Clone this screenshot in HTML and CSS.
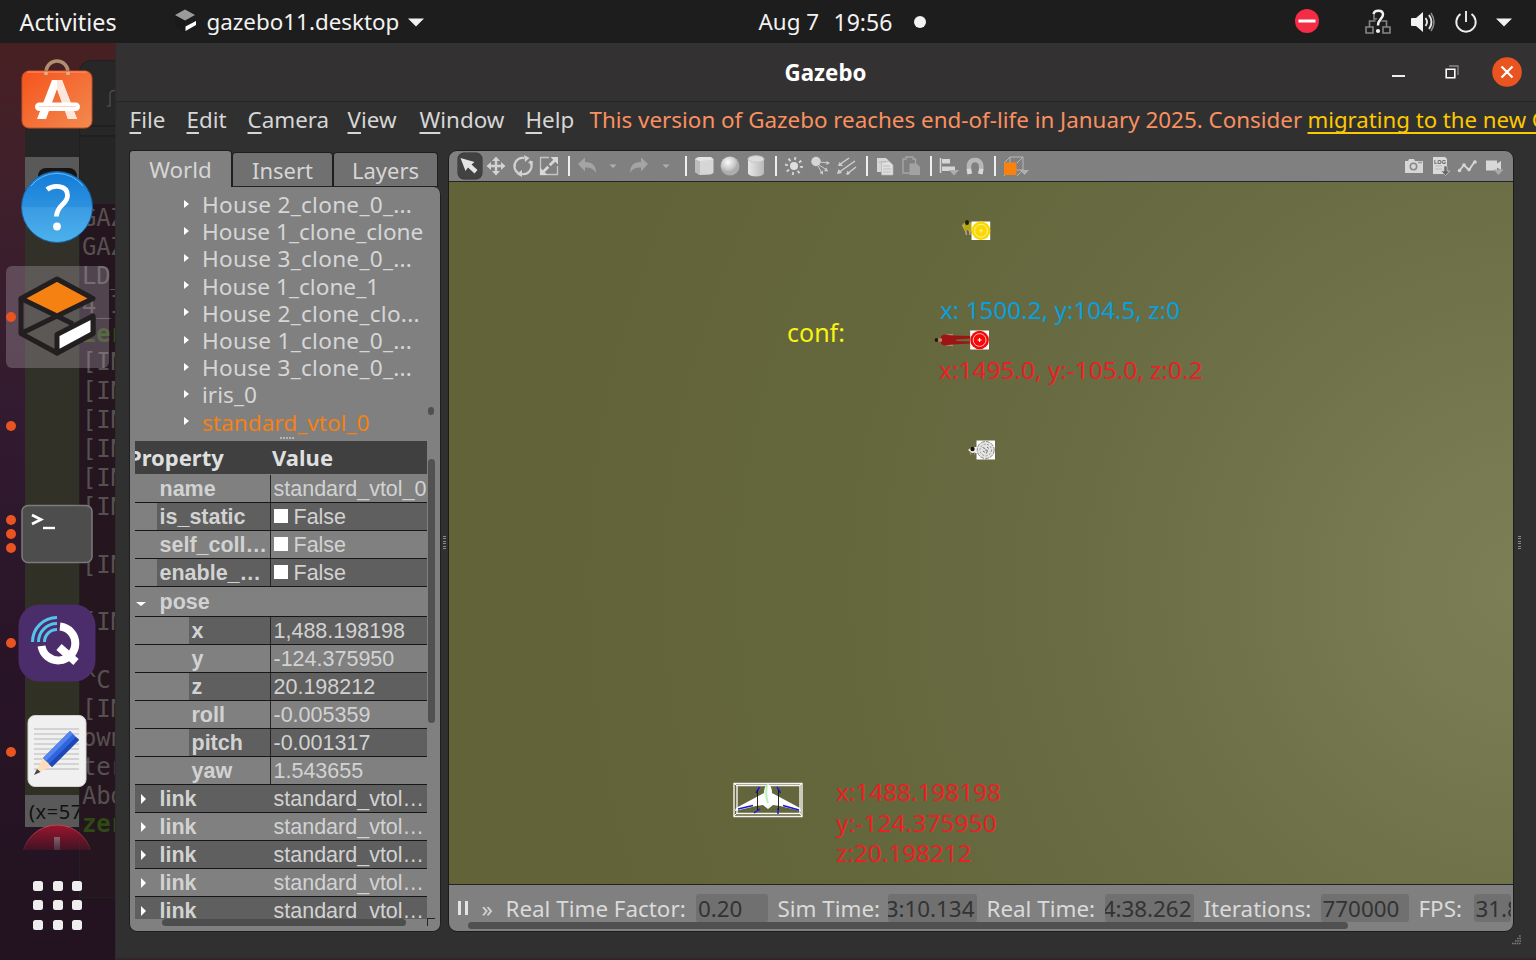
FILE: index.html
```
<!DOCTYPE html>
<html lang="en">
<head>
<meta charset="utf-8">
<title>Gazebo</title>
<link rel="stylesheet" href="styles.css">
</head>
<body>
<header class="topbar">
  <span class="activities">Activities</span>
  <svg class="app-mark" width="24" height="24" viewBox="0 0 24 24"><path d="M2 6 12 .5 22 6 12 11.500z" fill="#9a9a9a"/><path d="M2 7v10l10 6V12z" fill="#1a1a1a"/><path d="M12.500 17.500 23 12v4l-10.500 6z" fill="#fff"/></svg>
  <span class="app-name">gazebo11.desktop</span>
  <svg class="caret" width="16" height="9" viewBox="0 0 16 9"><path d="M0 .5h16L8 8.500z" fill="#f2f2f2"/></svg>
  <div class="clock"><span class="date">Aug 7</span><span class="time">19:56</span><i class="notice"></i></div>
  <div class="status">
    <svg width="26" height="26" viewBox="0 0 26 26"><circle cx="13" cy="13" r="12" fill="#f42c45"/><path d="M4.500 11.500h17v3h-17z" fill="#fff"/></svg>
    <svg class="s-net" width="28" height="28" viewBox="0 0 28 28"><g fill="none" stroke="#858585" stroke-width="1.600"><path d="M2 19h7v6H2zM19 19h7v6h-7zM5.500 19v-6h6M17 13h5.500v6M10 5v6h4"/></g><path d="M10 5.500C11 1 18.500 1 18.500 6c0 4-4.500 4-4.500 10" fill="none" stroke="#1d1d1d" stroke-width="5"/><path d="M9.500 6C10.500 1.500 19 1.500 19 6.500c0 4-5 4.500-5 11" fill="none" stroke="#f2f2f2" stroke-width="2.500"/><circle cx="14" cy="23" r="2.100" fill="#f2f2f2"/></svg>
    <svg class="s-vol" width="26" height="24" viewBox="0 0 26 24"><path d="M2 8h4l7-6v20l-7-6H2q-1 0-1-1V9q0-1 1-1z" fill="#f2f2f2"/><path d="M15.500 8q3 4 0 8M19 5q5 7 0 14" fill="none" stroke="#e6e6e6" stroke-width="1.900"/><path d="M21 3q6 9 0 18" fill="none" stroke="#8a8a8a" stroke-width="1.500"/></svg>
    <svg class="s-pow" width="24" height="24" viewBox="0 0 24 24"><path d="M6.500 4a9.700 9.700 0 1 0 11 0M12 1v11" fill="none" stroke="#eee" stroke-width="1.900"/></svg>
    <svg class="s-car" width="16" height="9" viewBox="0 0 16 9"><path d="M0 .5h16L8 8.500z" fill="#f2f2f2"/></svg>
  </div>
</header>

<main class="desktop">
  <aside class="dock">
    <div class="behind-sim"><div class="sim-tools"></div><div class="sim-note">(x=57</div></div>
    <div class="behind-term"><div class="term-head"><svg width="10" height="20" viewBox="0 0 10 20"><path d="M0 17h3V5q0-3.500 5-3.500" fill="none" stroke="#4a4a4a" stroke-width="1.500"/></svg></div><pre>GAZ
GAZ
LD_
4_I
<b>zer</b>
[IN
[IN
[IN
[IN
[IN
[IN

[IN

[IN

^C[
[IN
own
ter
Abo
<b>zer</b></pre></div>
    <ul class="launchers">
      <li class="software"><svg width="76" height="76" viewBox="0 0 76 76"><defs><linearGradient id="sw" x2="1" y2="1"><stop stop-color="#f5531c"/><stop offset="1" stop-color="#f28b50"/></linearGradient></defs><path d="M27 17v-3a11 11 0 0 1 22 0v3" fill="none" stroke="#b08f70" stroke-width="3.500"/><rect x="3" y="13" width="70" height="57" rx="7" fill="url(#sw)" stroke="#c65027"/><path d="M8 14h60" stroke="#ff9a70"/><path d="M27 17v-3M49 17v-3" stroke="#d9b391" stroke-width="3.500"/><path d="M33 22h10l15 39h-9L38 31 27 61h-9z" fill="#fff"/><path d="M38 22h5l15 39h-9L38 31z" fill="#ffe6dc"/><rect x="16" y="44.500" width="45" height="8.500" rx="4.200" fill="#fff"/><path d="M20 48.500h37" stroke="#ffd1c2"/></svg></li>
      <li><svg width="76" height="76" viewBox="0 0 76 76"><defs><linearGradient id="hp" x2="0" y2="1"><stop stop-color="#147bd8"/><stop offset=".5" stop-color="#2c92df"/><stop offset=".51" stop-color="#3b9ce3"/><stop offset="1" stop-color="#4cb1ec"/></linearGradient></defs><circle cx="38" cy="38" r="35.500" fill="url(#hp)" stroke="#17629f"/><path d="M12 17A33 33 0 0 1 64 17" fill="none" stroke="#65bdf5"/><path d="M28 20.500c6-4.500 20.500-5 20.500 6 0 9-11 9.500-11 21" fill="none" stroke="#fff" stroke-width="4.800"/><circle cx="38" cy="57.500" r="3.900" fill="#fff"/></svg></li>
      <li class="active"><i></i><svg width="84" height="84" viewBox="0 0 84 84"><g stroke="#231f20" stroke-width="5" stroke-linejoin="round"><path d="M6 24.500v35L42 79l36-19.500v-16M6 59.500 42 42l16 8" fill="none"/><path d="M6 24.500 42 5l36 19.500L42 42z" fill="#f58113"/><path d="M42 60.500 78 42v17.500L42 79z" fill="#fff"/></g></svg></li>
      <li><i></i></li>
      <li><i class="three"></i><svg width="76" height="64" viewBox="0 0 76 64"><rect x="3" y="3.500" width="70" height="57" rx="6" fill="#4d4d4d" stroke="#7b7b7b" stroke-width="1.500"/><path d="m13 13 9 4.500-9 4.500" fill="none" stroke="#fff" stroke-width="2.700"/><path d="M24 26h12" stroke="#fff" stroke-width="2.400"/></svg></li>
      <li><i></i><svg width="78" height="78" viewBox="0 0 78 78"><rect x=".5" y=".5" width="77" height="77" rx="21" fill="#4c2d6b"/><g fill="none" stroke="#55c4ec" stroke-width="3"><path d="M14.500 38A24.500 24.500 0 0 1 39 13.500M20.500 38A18.500 18.500 0 0 1 39 19.500M26.500 38A12.500 12.500 0 0 1 39 25.500"/></g><path d="M42 22.500A17 17 0 1 1 23.500 42" fill="none" stroke="#fff" stroke-width="8"/><path d="m41 43 17 15" stroke="#fff" stroke-width="8"/></svg></li>
      <li><i></i><svg width="62" height="76" viewBox="0 0 62 76"><rect x="2" y="2.500" width="58" height="71" rx="7" fill="#f0f0f0" stroke="#d2d2d2"/><path d="M8 16h45M8 21h45M8 26h45M8 31h45M8 36h45M8 41h45M8 46h45M8 51h45M8 56h45" stroke="#c9c9c9" stroke-width="1.500"/><path d="m8 62 9-17 8.500 8z" fill="#ffdcbc"/><path d="m8 62 3-6 3.500 3z" fill="#444"/><path d="m17 45 27-27 9 9-27 27z" fill="#2e64dc"/><path d="m17 45 27-27 3 3-27 27z" fill="#5585ed"/><path d="m23 51 27-27 3 3-27 27z" fill="#1f48b5"/></svg></li>
      <li class="fading"><svg width="76" height="76" viewBox="0 0 76 76"><circle cx="38" cy="38" r="35" fill="#98152d" stroke="#bd455b"/><path d="M38 15v20" stroke="#b98a94" stroke-width="6"/></svg></li>
    </ul>
    <div class="all-apps"><b></b><b></b><b></b><b></b><b></b><b></b><b></b><b></b><b></b></div>
  </aside>

  <section class="window">
    <div class="titlebar">
      <h1>Gazebo</h1>
      <div class="controls"><i class="min"></i>
        <svg class="max" width="14" height="14" viewBox="0 0 14 14"><path d="M4 1h9v9" fill="none" stroke="#888" stroke-width="1.300"/><path d="M1.200 4.200h8.600v8.600H1.200z" fill="none" stroke="#fff" stroke-width="1.600"/></svg>
        <svg class="close" width="30" height="30" viewBox="0 0 30 30"><circle cx="15" cy="15" r="14.800" fill="#e95420"/><path d="m9.500 9.500 11 11m0-11-11 11" stroke="#fff" stroke-width="2.200"/></svg></div>
    </div>
    <nav class="menu"><span><u>F</u>ile</span><span><u>E</u>dit</span><span><u>C</u>amera</span><span><u>V</u>iew</span><span><u>W</u>indow</span><span><u>H</u>elp</span><span class="eol">This version of Gazebo reaches end-of-life in January 2025. Consider</span><a>migrating to the new Gazebo</a></nav>
    <div class="work">
      <div class="left">
        <div class="tabs"><span class="on">World</span><span>Insert</span><span>Layers</span></div>
        <div class="panel">
          <ul class="tree">
            <li class="cut">House 2_clone_0_...</li><li>House 1_clone_clone</li><li class="cut">House 3_clone_0_...</li><li>House 1_clone_1</li><li class="cut">House 2_clone_clo...</li><li class="cut">House 1_clone_0_...</li><li class="cut">House 3_clone_0_...</li><li>iris_0</li><li class="sel">standard_vtol_0</li>
          </ul>
          <i class="tree-scroll"></i><i class="v-grip"></i>
          <div class="props">
            <div class="head"><span><em>Property</em></span><span>Value</span></div>
            <div class="row"><b>name</b><span>standard_vtol_0</span></div>
            <div class="row dark"><b>is_static</b><span><i></i>False</span></div>
            <div class="row"><b>self_coll…</b><span><i></i>False</span></div>
            <div class="row dark"><b>enable_…</b><span><i></i>False</span></div>
            <div class="row group open"><b>pose</b><span></span></div>
            <div class="row dark deep"><b>x</b><span>1,488.198198</span></div>
            <div class="row deep"><b>y</b><span>-124.375950</span></div>
            <div class="row dark deep"><b>z</b><span>20.198212</span></div>
            <div class="row deep"><b>roll</b><span>-0.005359</span></div>
            <div class="row dark deep"><b>pitch</b><span>-0.001317</span></div>
            <div class="row deep"><b>yaw</b><span>1.543655</span></div>
            <div class="row dark group"><b>link</b><span>standard_vtol…</span></div>
            <div class="row group"><b>link</b><span>standard_vtol…</span></div>
            <div class="row dark group"><b>link</b><span>standard_vtol…</span></div>
            <div class="row group"><b>link</b><span>standard_vtol…</span></div>
            <div class="row dark group"><b>link</b><span>standard_vtol…</span></div>
          </div>
          <i class="props-v"></i><i class="props-h"></i><i class="corner"></i>
        </div>
      </div>
      <div class="splitter"><i></i></div>
      <div class="view">
        <div class="tools">
          <svg class="pressed" viewBox="0 0 24 24"><path d="m2.500 4 14 4-3 2.500 6 5.500-3 3.500-6.500-6-2.500 3.500z" fill="#e4e4e4"/></svg>
          <svg viewBox="0 0 24 24"><path d="M12 5v14M5 12h14" stroke="#d2d2d2" stroke-width="2.400"/><path d="m12 2.500 4 4.500H8zM12 21.500 8 17h8zM2.500 12 7 8v8zM21.500 12 17 16V8z" fill="#d2d2d2"/></svg>
          <svg viewBox="0 0 24 24"><path d="M5 17A8.300 8.300 0 0 1 13 4M19 7a8.300 8.300 0 0 1-8 13M4 10a8.300 8.300 0 0 0 3 9" fill="none" stroke="#d2d2d2" stroke-width="2.200"/><path d="m13 1 5.500 3L14 8zM11 16v7l-5.500-3zM17 8l5-1-1 5z" fill="#d2d2d2"/></svg>
          <svg viewBox="0 0 24 24"><path d="M12 3.500H3.500V12M20.500 12v8.500H12M3.500 12v8.500H12" fill="none" stroke="#c4c4c4" stroke-width="1.300"/><path d="m6 18 12-12" stroke="#d8d8d8" stroke-width="2.700" stroke-dasharray="7.500 2"/><path d="M13.500 3H21v7.500zM3 13.500 10.500 21H3z" fill="#d8d8d8"/></svg>
          <s></s>
          <svg viewBox="0 0 24 24"><path d="m3 10 7-6.500V8q11 0 11 11-3-6-11-5.500v4z" fill="#a4a4a4"/></svg>
          <svg viewBox="0 0 24 24"><path d="M8.500 10.500h7L12 14z" fill="#b0b0b0"/></svg>
          <svg viewBox="0 0 24 24"><path d="m21 10-7-6.500V8Q3 8 3 19q3-6 11-5.500v4z" fill="#a4a4a4"/></svg>
          <svg viewBox="0 0 24 24"><path d="M8.500 10.500h7L12 14z" fill="#b0b0b0"/></svg>
          <s></s>
          <svg viewBox="0 0 24 24"><path d="m3 5 3-2h12l3.500 2v14l-3 1.500-11 .5L3 18z" fill="#d6d6d6"/><path d="m3 5 5 2v14l-5-3z" fill="#bcbcbc"/><path d="m3 5 5-2h11l2.500 2.500L8 7z" fill="#e4e4e4"/></svg>
          <svg viewBox="0 0 24 24"><defs><radialGradient id="ball" cx=".4" cy=".3"><stop stop-color="#fafafa"/><stop offset=".8" stop-color="#c5c5c5"/><stop offset="1" stop-color="#adadad"/></radialGradient></defs><circle cx="12" cy="12" r="9.500" fill="url(#ball)"/></svg>
          <svg viewBox="0 0 24 24"><defs><linearGradient id="cyl"><stop stop-color="#e8e8e8"/><stop offset="1" stop-color="#b8b8b8"/></linearGradient></defs><path d="M4 5v14c0 4.500 16 4.500 16 0V5z" fill="url(#cyl)"/><ellipse cx="12" cy="5" rx="8" ry="3.200" fill="#dcdcdc" stroke="#c5c5c5"/></svg>
          <s></s>
          <svg viewBox="0 0 24 24"><circle cx="12" cy="12" r="4" fill="#dedede"/><circle cx="12" cy="12" r="7.500" fill="none" stroke="#d5d5d5" stroke-width="3" stroke-dasharray="1.900 3.990"/></svg>
          <svg viewBox="0 0 24 24"><circle cx="8" cy="7.500" r="4.700" fill="#d5d5d5"/><path d="m12 8 8 1M11 11l8 5M10 12l4 7" stroke="#ccc" stroke-width="1"/><path d="m18.500 7 3.500 2-3.500 2zM18.500 13.500l1.500 4-4-.5zM15 16.500v4l-3.500-1.500z" fill="#ccc"/></svg>
          <svg viewBox="0 0 24 24"><path d="M4 11 14 4M3 19 20 7M12 20l9-7" stroke="#cfcfcf" stroke-width="1.500"/><path d="m3 12 1.500-4L8 12zM2 20l1.500-5 3.500 4zM11 21l1.500-4.500L15 20z" fill="#cfcfcf"/></svg>
          <s></s>
          <svg viewBox="0 0 24 24"><path d="M4 4h9l3 3v11H4z" fill="#d6d6d6"/><path d="M8.500 7.500h8l3.500 3.500v10H8.500z" fill="#dfdfdf" stroke="#b5b5b5" stroke-width=".7"/><path d="M5.500 8h8M10 12h7M10 15h8M10 18h8" stroke="#b4b4b4" stroke-width=".8"/></svg>
          <svg viewBox="0 0 24 24"><path d="M4 5h3V3h7v2h2.500v14H4z" fill="none" stroke="#a5a5a5" stroke-width="1.400"/><path d="M10.500 9.500h7l3.500 3.500v8H10.500z" fill="#a2a2a2"/></svg>
          <s></s>
          <svg viewBox="0 0 24 24"><path d="M3.500 4v15" stroke="#d5d5d5" stroke-width="1.500"/><path d="M5 5h8v4.500H5zM5 12.500h13V17H5z" fill="#d5d5d5"/><path d="M12 16h10l-5 5.500z" fill="#aeaeae"/></svg>
          <svg viewBox="0 0 24 24"><path d="M7 19.500Q3.500 6 12 6t5.500 13.500" fill="none" stroke="#b7b7b7" stroke-width="4.600"/><path d="m3.500 15 4-.5 1.500 5-4.500 1zM20.500 15l-4-.5-1.500 5 4.500 1z" fill="#d8d8d8"/></svg>
          <s></s>
          <svg viewBox="0 0 28 24" class="wide"><path d="M3 9 9 3h13v13l-6 6M9 3v13h13M16 9l6-6M9 16l-6 6" fill="none" stroke="#b6b6b6"/><path d="M3 8.500h12.500V21H3z" fill="#f8810f"/><path d="M19 16h9l-4.500 5z" fill="#b0b0b0"/></svg>
          <div class="tools-end">
            <svg viewBox="0 0 24 24"><path d="M3 7h3l1-2h5l1 2h8v12H3z" fill="#d6d6d6"/><circle cx="11.500" cy="12.500" r="3.200" fill="none" stroke="#888" stroke-width="1.500"/><path d="M16 8.500h4" stroke="#999" stroke-width="1.300"/></svg>
            <svg viewBox="0 0 24 24"><path d="M4 3h12l2 2v15H4z" fill="#dadada"/><text x="5" y="9.500" class="log">LOG</text><path d="M6 12h7M6 15h7" stroke="#bbb"/><path d="M15 12h3v5h3l-4.500 4.500L12 17h3z" fill="#666" stroke="#d0d0d0" stroke-width=".7"/></svg>
            <svg viewBox="0 0 24 24"><path d="m4 17 5-6 5 5 6-9" fill="none" stroke="#d6d6d6" stroke-width="1.800"/><g fill="#d6d6d6"><circle cx="4.500" cy="16.500" r="1.800"/><circle cx="9" cy="11" r="1.800"/><circle cx="14" cy="15.500" r="1.800"/><circle cx="20" cy="8" r="1.800"/></g></svg>
            <svg viewBox="0 0 24 24"><path d="M4 6.500h11v3l4-2.500v9l-4-2.500v3H4z" fill="#d8d8d8"/><path d="M11.500 15.500h10l-5 5.500z" fill="#aaa"/></svg>
          </div>
        </div>
        <div class="scene">
          <p class="tag yellow conf">conf:</p>
          <p class="tag blue upper">x: 1500.2, y:104.5, z:0</p>
          <p class="tag red lower">x:1495.0, y:-105.0, z:0.2</p>
          <p class="tag red craft-pos">x:1488.198198<br><span>y:-124.375950</span><br>z:20.198212</p>
          <svg class="pin pin-y" width="30" height="22" viewBox="0 0 30 22"><path d="M1 6 5 2l6 2v7l-1.500 3-3-3-3 1z" fill="#b3a90e"/><path d="m2 6 1 3M4.500 11l1 5M8.500 11l.5 5" stroke="#c9a27c" stroke-width="1.400"/><ellipse cx="6" cy="3.500" rx="2" ry="2.500" fill="#1d1b10"/><path d="M10.500 2.500h18.700v18.500H10.500z" fill="#fff"/><circle cx="20" cy="11.700" r="9.300" fill="#fbd900"/><circle cx="20" cy="11.700" r="6.400" fill="none" stroke="#fff19c"/><path d="M18 11.700h4M20 9.700v4" stroke="#fff8c8" stroke-width=".8"/></svg>
          <svg class="pin pin-r" width="56" height="22" viewBox="0 0 56 22"><path d="m11 6.500 8-1M11 15.500l8 1" stroke="#bb8965" stroke-width="1.500"/><path d="m7 7 3-1.500 8 1 18 .5v2.500l-14 1v1.500l14 .5v2l-18 1-8 1L7 15z" fill="#9c1416"/><path d="M3 11h5" stroke="#bb8965" stroke-width="3"/><circle cx="2.500" cy="11" r="1.900" fill="#29170f"/><path d="M36.200 1.500H55V20.500H36.200z" fill="#fff"/><circle cx="45.600" cy="11" r="9.300" fill="#fb0707"/><circle cx="45.600" cy="11" r="6.400" fill="none" stroke="#ffc0c0"/><path d="M43.600 11h4M45.600 9v4" stroke="#fff"/></svg>
          <svg class="pin pin-w" width="30" height="22" viewBox="0 0 30 22"><path d="m1 11 4-3 6 0-1 6-5 0z" fill="#eee"/><circle cx="5.500" cy="10" r="2.200" fill="#17140f"/><path d="m3 13 1 3M7 13l1 3" stroke="#b38f70"/><path d="M9.500 1.500H28V20.500H9.500z" fill="#fff"/><circle cx="18.700" cy="11" r="8.500" fill="#e4e4e4" stroke="#888" stroke-dasharray="4 1"/><circle cx="18.700" cy="11" r="5.800" fill="none" stroke="#999" stroke-dasharray="2 1.500"/><path d="m15.500 8.500 2.500 1M20 8l2 1.500M16 12l2 1.500M20.500 11l-1 3.500M18 11h2" stroke="#666" stroke-width=".9"/></svg>
          <svg class="pin craft" width="70" height="36" viewBox="0 0 70 36"><path d="M1 1.500h68v33H1zM4 3.500h63v28H4z" fill="none" stroke="#f4f4f4" stroke-width="1.400"/><path d="m1 34 3-3M66 31l3 3M1 1l3 3M66 4l3-3" stroke="#fff"/><path d="M35 2q4 2 4 9l28 15 1 3-21-5-7-1-5 4-5-4-7 1-21 5 1-3 28-15q0-7 4-9z" fill="#fff"/><path d="M34 3q-2 10 1 18" fill="none" stroke="#b6f4b4" stroke-width="2"/><path d="m5 27 15-3.500M50 23.500 66 28M23 11l3.500-6M44 5l3.500 6M21 31l6-4M45 26v6" stroke="#1919e0" stroke-width="1.500"/><path d="M24.500 8v20M45.500 8v20" stroke="#111" stroke-width=".9"/></svg>
        </div>
        <div class="readout">
          <i class="pause"></i><span class="step">»</span>
          <label class="l1">Real Time Factor:</label><output class="o1">0.20</output>
          <label class="l2">Sim Time:</label><output class="o2 end"><em>3:10.134</em></output>
          <label class="l3">Real Time:</label><output class="o3 end"><em>4:38.262</em></output>
          <label class="l4">Iterations:</label><output class="o4">770000</output>
          <label class="l5">FPS:</label><output class="o5">31.85</output>
          <i class="readout-scroll"></i>
        </div>
      </div>
      <div class="splitter right"><i></i></div>
    </div>
    <svg class="resize" width="10" height="10" viewBox="0 0 10 10"><path d="M7 1h2M5 3.500h4M3 6h6M0 8.500h9" stroke="#777" stroke-width="1.700" stroke-dasharray="1.700 .6"/></svg>
  </section>
</main>
</body>
</html>
```
FILE: styles.css
```
* { box-sizing: border-box; }
body { margin: 0; width: 1536px; height: 960px; overflow: hidden; display: flex; flex-direction: column; background: #231520; color: #d6d6d6; font: 22.4px/28px "Noto Sans", "Open Sans", sans-serif; white-space: nowrap; }
ul, p, h1, pre { margin: 0; padding: 0; list-style: none; }
svg { display: block; flex: none; }
em { font-style: normal; }

.topbar { position: relative; height: 43px; flex: none; display: flex; align-items: center; background: #1d1d1d; color: #f2f2f2; padding-left: 19.500px; }
.activities { font-size: 23.3px; width: 153px; }
.app-mark { margin-top: -1px; }
.app-name { margin-left: 10px; width: 201.500px; }
.caret { margin-top: 1px; }
.clock { position: absolute; left: 758.500px; top: 8px; display: flex; align-items: center; }
.date { width: 75px; }
.time { font-size: 23px; width: 80.500px; }
.notice { width: 12px; height: 12px; border-radius: 50%; background: #f2f2f2; }
.status { margin-left: auto; padding-right: 24px; display: flex; align-items: center; }
.status > svg:first-child { margin-top: -1px; }
.s-net { margin-left: 44px; }
.s-vol { margin-left: 18px; }
.s-pow { margin-left: 18px; }
.s-car { margin-left: 18px; margin-top: 1px; }

.desktop { flex: 1; display: flex; min-height: 0; }
.dock { position: relative; width: 115px; flex: none; overflow: hidden; background: linear-gradient(180deg, #482022 0, #41202a 12%, #321b30 40%, #291428 65%, #22131f 100%); }
.behind-sim { position: absolute; left: 25px; top: 70px; width: 54px; height: 714px; background: linear-gradient(#262626 44px, #595959 44px, #595959 88px, #31312a 88px, #303024); overflow: hidden; display: flex; flex-direction: column; justify-content: space-between; }
.sim-tools { width: 39px; height: 40px; margin: 55px 0 0 13px; border-radius: 8px; background: #151515; }
.sim-note { height: 32px; background: #595959; color: #111; font-size: 20px; line-height: 34px; padding-left: 4px; letter-spacing: .6px; }
.behind-term { position: absolute; left: 79px; top: 17px; width: 60px; height: 838px; border: 1px solid #202020; border-top-left-radius: 12px; background: #24151f; }
.term-head { height: 143px; border-radius: 11px 0 0; background: linear-gradient(#272727 64px, #1f1f1f 64px, #1f1f1f 66px, #272727 66px, #272727 74px, #1f1f1f 74px, #1f1f1f 76px, #252525 76px); padding: 28px 0 0 27px; }
.behind-term pre { color: #56504f; font: 24px/28.87px "DejaVu Sans Mono", monospace; letter-spacing: -.3px; padding-left: 2px; }
.behind-term pre b { color: #2e4a13; }
.launchers { position: relative; height: 807px; overflow: hidden; padding: 1.200px 1px 0 0; }
.launchers li { position: relative; height: 108.800px; display: flex; align-items: center; justify-content: center; }
.launchers .software svg { margin-top: -5px; }
.launchers li > svg { position: relative; }
.launchers i { position: absolute; left: 6px; top: 50px; width: 10px; height: 10px; border-radius: 50%; background: #e95420; }
.launchers .three { box-shadow: 0 -14px #e95420, 0 14px #e95420; }
.active::before { content: ""; position: absolute; left: 6px; top: 4px; width: 103px; height: 102px; border-radius: 6px; background: rgba(190,180,190,.3); }
.fading { mask-image: linear-gradient(#000 20px, transparent 52px); }
.all-apps { position: relative; display: grid; grid-template-columns: repeat(3, 10px); gap: 9.300px; justify-content: center; padding-top: 31px; }
.all-apps b { height: 10px; border-radius: 2.500px; background: #eee; }

.window { position: relative; flex: 1; min-width: 0; display: flex; flex-direction: column; background: #303030; border-left: 1px solid #2b2b2b; border-bottom: 2px solid #2d2529; overflow: hidden; }
.titlebar { position: relative; height: 59px; flex: none; background: #333132; border-bottom: 1px solid #252525; display: flex; align-items: center; }
.titlebar h1 { width: 1419px; text-align: center; font-size: 22.3px; line-height: 28px; color: #fff; padding-top: 2px; }
.controls { position: absolute; right: 14px; top: 14px; display: flex; align-items: center; }
.min { width: 13px; height: 2px; background: #eee; margin: 8px 40px 0 0; }
.max { margin-right: 33px; }
.menu { height: 48px; flex: none; display: grid; grid-template-columns: 57px 61px 100px 72px 106px 64px 718px auto; padding: 4px 0 0 13.500px; }
.menu u { text-decoration-thickness: 2px; text-underline-offset: 4px; text-decoration-skip-ink: none; }
.menu span, .menu a { line-height: 27px; }
.eol { color: #fa9060; }
.menu a { color: #fdc800; font-size: 22.2px; text-decoration: underline; text-decoration-thickness: 2px; text-underline-offset: 4px; text-decoration-skip-ink: none; }

.work { height: 782px; display: flex; padding-left: 13px; }
.left { width: 312px; display: flex; flex-direction: column; }
.tabs { height: 37px; display: flex; align-items: flex-end; padding-left: 1px; }
.tabs span { height: 35px; width: 101px; padding-top: 3px; text-align: center; background: #707070; border: 1px solid #1e1e1e; border-bottom-color: #222; border-radius: 4px 4px 0 0; font-size: 22px; }
.tabs span:last-child { width: 105px; }
.tabs .on { width: 103px; height: 37px; background: #808080; border-bottom: 0; font-size: 22.4px; padding-top: 5px; margin-left: -1px; }
.panel { position: relative; height: 745px; background: #808080; border: 1px solid #1f1f1f; border-top: 0; border-radius: 0 7px 8px 8px; }
.tree { height: 254px; padding: 4px 0 0 54px; overflow: hidden; }
.tree li { height: 27.200px; line-height: 27px; display: flex; align-items: center; font-size: 22.650px; }
.tree .cut { letter-spacing: .25px; }
.tree li::before { content: ""; border: 4px solid transparent; border-left: 5px solid #fff; border-right: 0; margin-right: 13px; margin-top: -2px; }
.tree .sel { color: #f58113; }
.tree-scroll { position: absolute; right: 6px; top: 220px; width: 6px; height: 8px; border-radius: 3px; background: #505050; }
.v-grip { position: absolute; left: 150px; top: 250px; width: 14px; height: 2px; background: repeating-linear-gradient(90deg, #b5b5b5 0 2px, transparent 2px 3px); }
.props { margin-left: 5px; width: 292px; height: 478px; overflow: hidden; font: 21.5px/27px "Liberation Sans", Arial, sans-serif; color: #d2d2d2; }
.head { height: 33px; display: grid; grid-template-columns: 135px 1fr; background: #404040; color: #dfdfdf; font: bold 22px/33px "Noto Sans", sans-serif; }
.head span { overflow: hidden; }
.head em { margin-left: -7px; }
.head span:last-child { padding-left: 2px; }
.row { position: relative; height: 28px; display: grid; grid-template-columns: 135px 1fr; border-bottom: 1px solid #171717; }
.head + .row { height: 29px; padding-top: 1px; }
.row b { padding: 1px 0 0 24.500px; line-height: 26px; }
.row span { border-left: 1px solid #252525; padding: 1px 0 0 2.500px; line-height: 26px; display: flex; align-items: center; }
.row span i { width: 14px; height: 14px; background: #fff; margin: -3px 6px 0 0; }
.dark { background: linear-gradient(90deg, #808080 22px, #5f5f5f 22px); }
.deep b { padding-left: 56.500px; }
.dark.deep { background: linear-gradient(90deg, #808080 54px, #5f5f5f 54px); }
.dark.group { background: #5f5f5f; }
.group span { border-color: transparent; }
.group::before { content: ""; position: absolute; left: 6px; top: 9px; border: 5px solid transparent; border-left-color: #fff; border-right: 0; }
.open { height: 30px; padding-top: 1px; }
.open::before { left: 1px; top: 15px; border: 5px solid transparent; border-top: 4px solid #fff; border-bottom: 0; }
.props-v { position: absolute; left: 298px; top: 272px; width: 7px; height: 264px; border-radius: 4px; background: #515151; }
.props-h { position: absolute; left: 32px; top: 732px; width: 244px; height: 7px; border-radius: 4px; background: #4d4d4d; }
.corner { position: absolute; left: 297px; top: 731px; width: 8px; height: 8px; border: solid #252525; border-width: 1px 0 0 1px; }
.splitter { width: 7px; padding: 386px 0 0 2px; }
.splitter i { display: block; width: 3px; height: 14px; background: repeating-linear-gradient(#8a8a8a 0 1px, transparent 1px 2.500px); }
.splitter.right { width: 22px; padding-left: 4px; }

.view { width: 1066px; display: flex; flex-direction: column; border: 1px solid #1c1c1c; border-radius: 9px; overflow: hidden; background: #808080; }
.tools { height: 31px; flex: none; display: flex; align-items: center; gap: 2.250px; padding-left: 9px; border-bottom: 1px solid #252525; }
.tools svg { width: 24px; height: 24px; }
.tools .wide { width: 28px; }
.tools s { width: 9.500px; height: 20px; background: linear-gradient(#eee, #eee) 5px 0 / 2px 20px no-repeat; }
.tools .pressed { background: #424242; border-radius: 6px; box-shadow: 0 0 0 .5px #2c2c2c; height: 26px; }
.tools-end { margin-left: auto; padding-right: 7px; display: flex; gap: 2.700px; }
.log { font: bold 5.500px "Liberation Sans", sans-serif; fill: #555; }
.scene { position: relative; height: 703px; flex: none; border-bottom: 1px solid #222; background: radial-gradient(circle at 1075px 405px, #7c7f55 0, #787b51 130px, #70734a 300px, #696b42 480px, #64663c 700px, #626339 1000px); }
.tag { position: absolute; font-size: 24.300px; line-height: 31px; }
.yellow { color: #f9f313; }
.blue { color: #0a9fdc; }
.red { color: #ec2024; }
.conf { left: 338px; top: 135px; font-size: 25px; }
.upper { left: 491px; top: 112px; }
.lower { left: 490px; top: 172px; font-size: 24.450px; }
.craft-pos { left: 387px; top: 595px; line-height: 30.500px; }
.craft-pos span { letter-spacing: .2px; }
.pin { position: absolute; }
.pin-y { left: 512px; top: 37px; }
.pin-r { left: 485px; top: 147px; }
.pin-w { left: 518px; top: 257px; }
.craft { left: 284px; top: 600px; }
.readout { position: relative; flex: 1; display: flex; padding: 9px 0 0 8.500px; }
.readout label { color: #dadada; flex: none; line-height: 29px; }
.readout output { flex: none; height: 28px; line-height: 29px; background: #707070; border-radius: 3px; color: #333; overflow: hidden; padding-left: 2px; }
.pause { width: 10px; height: 14px; flex: none; border: solid #e4e4e4; border-width: 0 3px; margin-top: 7px; }
.step { width: 38px; flex: none; padding-left: 14px; line-height: 29px; }
.l1 { width: 190.500px; }
.o1 { width: 72px; margin-right: 9.500px; }
.l2 { width: 110px; }
.o2 { width: 89px; margin-right: 10px; }
.l3 { width: 118px; }
.o3 { width: 89px; margin-right: 10px; }
.l4 { width: 117px; }
.o4 { width: 88px; margin-right: 10px; }
.l5 { width: 55px; }
.o5 { width: 37px; }
.readout .end { display: flex; justify-content: flex-end; padding: 0 2px 0 0; }
.readout-scroll { position: absolute; left: 19px; bottom: 2px; width: 880px; height: 7px; border-radius: 4px; background: #505050; }
.resize { position: absolute; right: 14px; bottom: 13px; }
```
